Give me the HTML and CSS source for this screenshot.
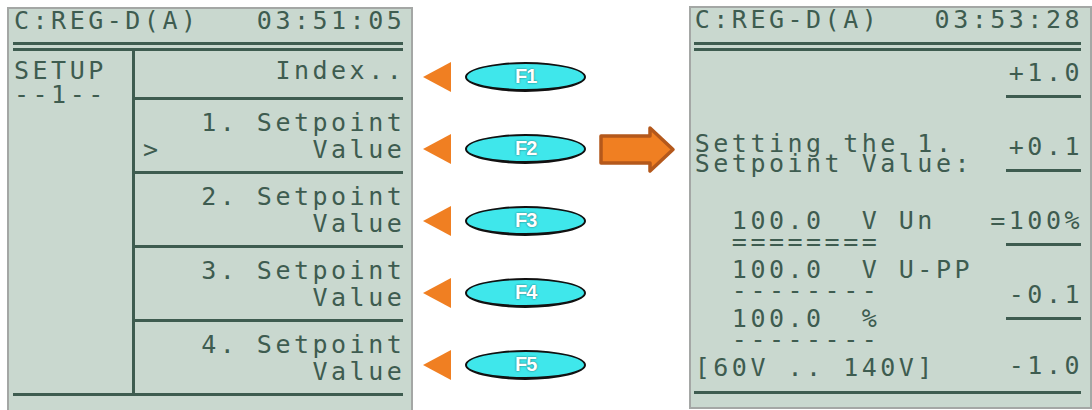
FILE: index.html
```html
<!DOCTYPE html>
<html>
<head>
  <title>REG-D Setpoint Menu</title>
  <link rel="stylesheet" href="styles.css">
</head>
<body>
  <!-- left display: setup menu -->
  <div class="lcd lcd-left">
    <div class="lcd-head">
      <span>C:REG-D(A)</span>
      <span class="r">03:51:05</span>
    </div>
    <div class="rule-double"></div>
    <div class="menu">
      <div class="menu-title">
        <div>SETUP</div>
        <div>--1--</div>
      </div>
      <div class="menu-items">
        <div class="item item-first"><div class="r">Index..</div></div>
        <div class="item">
          <div class="r">1. Setpoint</div>
          <div class="item-line"><span class="cursor">&gt;</span><span class="r">Value</span></div>
        </div>
        <div class="item">
          <div class="r">2. Setpoint</div>
          <div class="r">Value</div>
        </div>
        <div class="item">
          <div class="r">3. Setpoint</div>
          <div class="r">Value</div>
        </div>
        <div class="item">
          <div class="r">4. Setpoint</div>
          <div class="r">Value</div>
        </div>
      </div>
    </div>
  </div>

  <!-- soft keys -->
  <div class="keypad">
    <div class="key-row"><span class="pointer"></span><span class="fkey">F1</span></div>
    <div class="key-row">
      <span class="pointer"></span><span class="fkey">F2</span>
      <svg class="goto" width="78" height="49" viewBox="0 0 78 49">
        <path d="M3 11 H52 V3 L75 24.5 L52 46 V38 H3 Z" fill="#f07f22" stroke="#b4581b" stroke-width="3.5" stroke-linejoin="round"/>
      </svg>
    </div>
    <div class="key-row"><span class="pointer"></span><span class="fkey">F3</span></div>
    <div class="key-row"><span class="pointer"></span><span class="fkey">F4</span></div>
    <div class="key-row"><span class="pointer"></span><span class="fkey">F5</span></div>
  </div>

  <!-- right display: setpoint entry -->
  <div class="lcd lcd-right">
    <div class="lcd-head">
      <span>C:REG-D(A)</span>
      <span class="r">03:53:28</span>
    </div>
    <div class="rule-double"></div>
    <div class="entry">
      <div class="entry-text">
        <div class="prompt">Setting the 1.<br>Setpoint Value:</div>
        <div class="val first">  100.0  V Un</div>
        <div class="sep">  ========</div>
        <div class="val">  100.0  V U-PP</div>
        <div class="sep">  --------</div>
        <div class="val">  100.0  %</div>
        <div class="sep">  --------</div>
        <div class="val">[60V .. 140V]</div>
      </div>
      <div class="keys">
        <div class="key"><span class="r">+1.0</span></div>
        <div class="key"><span class="r">+0.1</span></div>
        <div class="key"><span class="r">=100%</span></div>
        <div class="key"><span class="r">-0.1</span></div>
        <div class="key key-last"><span class="r">-1.0</span></div>
      </div>
    </div>
  </div>
</body>
</html>
```

FILE: styles.css
```css
body {
  margin: 0;
  width: 1092px;
  height: 410px;
  overflow: hidden;
  background-color: white;
  display: flex;
  align-items: flex-start;
}

/* LCD panels */
.lcd {
  box-sizing: border-box;
  background-color: #c9d8cf;
  border: 2px solid #a4a7a5;
  color: #3e5c50;
  font-family: "DejaVu Sans Mono", monospace;
  font-size: 25px;
  line-height: 24px;
  letter-spacing: 3.5px;
}
.lcd-left {
  width: 407px;
  height: 412px;
  margin: 7px 0 0 7px;
  padding: 0 8px 0 4px;
}
.lcd-right {
  width: 404px;
  height: 403px;
  margin-top: 6px;
  padding: 0 9px 0 3px;
}
.lcd-head {
  display: flex;
  justify-content: space-between;
  padding-left: 1px;
  margin-bottom: 9px;
}
.lcd-right .lcd-head {
  margin-bottom: 10px;
}
.r {
  margin-right: -2px;
}
.rule-double {
  height: 3px;
  border-top: 3px solid #3e5c50;
  border-bottom: 3px solid #3e5c50;
}

/* setup menu */
.menu {
  display: grid;
  grid-template-columns: 122px 1fr;
  border-bottom: 3px solid #3e5c50;
}
.menu-title {
  border-right: 3px solid #3e5c50;
  padding: 8px 0 0 1px;
}
.menu-items {
  display: grid;
  grid-template-rows: 49px 74px 74px 74px 71px;
}
.item {
  box-sizing: border-box;
  text-align: right;
  line-height: 27px;
  padding-top: 9px;
  border-bottom: 3px solid #3e5c50;
}
.item:last-child {
  border-bottom: none;
}
.item-first {
  line-height: 24px;
  padding-top: 8px;
}
.item-line {
  display: flex;
  justify-content: space-between;
}
.cursor {
  padding-left: 8px;
}

/* soft keys */
.keypad {
  width: 276px;
  padding-top: 41px;
}
.key-row {
  height: 72px;
  display: flex;
  align-items: center;
}
.pointer {
  width: 0;
  height: 0;
  margin-left: 10px;
  border-top: 15px solid transparent;
  border-bottom: 15px solid transparent;
  border-right: 28px solid #f07f22;
}
.fkey {
  box-sizing: border-box;
  width: 121px;
  height: 30px;
  margin-left: 14px;
  border: 2px solid #111;
  border-bottom-width: 3px;
  border-radius: 50%;
  background-color: #3fe7eb;
  color: white;
  font-family: "Liberation Sans", Arial, sans-serif;
  font-weight: bold;
  font-size: 20px;
  line-height: 25px;
  text-align: center;
  letter-spacing: -1px;
  text-shadow: 0 0 2px rgba(0, 0, 0, 0.6);
}
.goto {
  margin-left: 12px;
}

/* setpoint entry */
.entry {
  display: grid;
  grid-template-columns: 1fr 95px;
  height: 343px;
  box-sizing: border-box;
  border-bottom: 3px solid #3e5c50;
}
.entry-text {
  padding-left: 1px;
}
.prompt {
  margin-top: 83px;
  line-height: 20px;
}
.val, .sep {
  white-space: pre;
}
.val.first {
  margin-top: 35px;
}
.sep {
  line-height: 17px;
  padding-bottom: 8px;
}
.keys {
  display: grid;
  grid-template-rows: 47px 74px 74px 74px 1fr;
}
.key {
  display: flex;
  flex-direction: column;
  justify-content: flex-end;
  align-items: flex-end;
}
.key::after {
  content: "";
  width: 75px;
  height: 3px;
  margin-top: 10px;
  background-color: #3e5c50;
}
.key-last::after {
  background-color: transparent;
}
```
